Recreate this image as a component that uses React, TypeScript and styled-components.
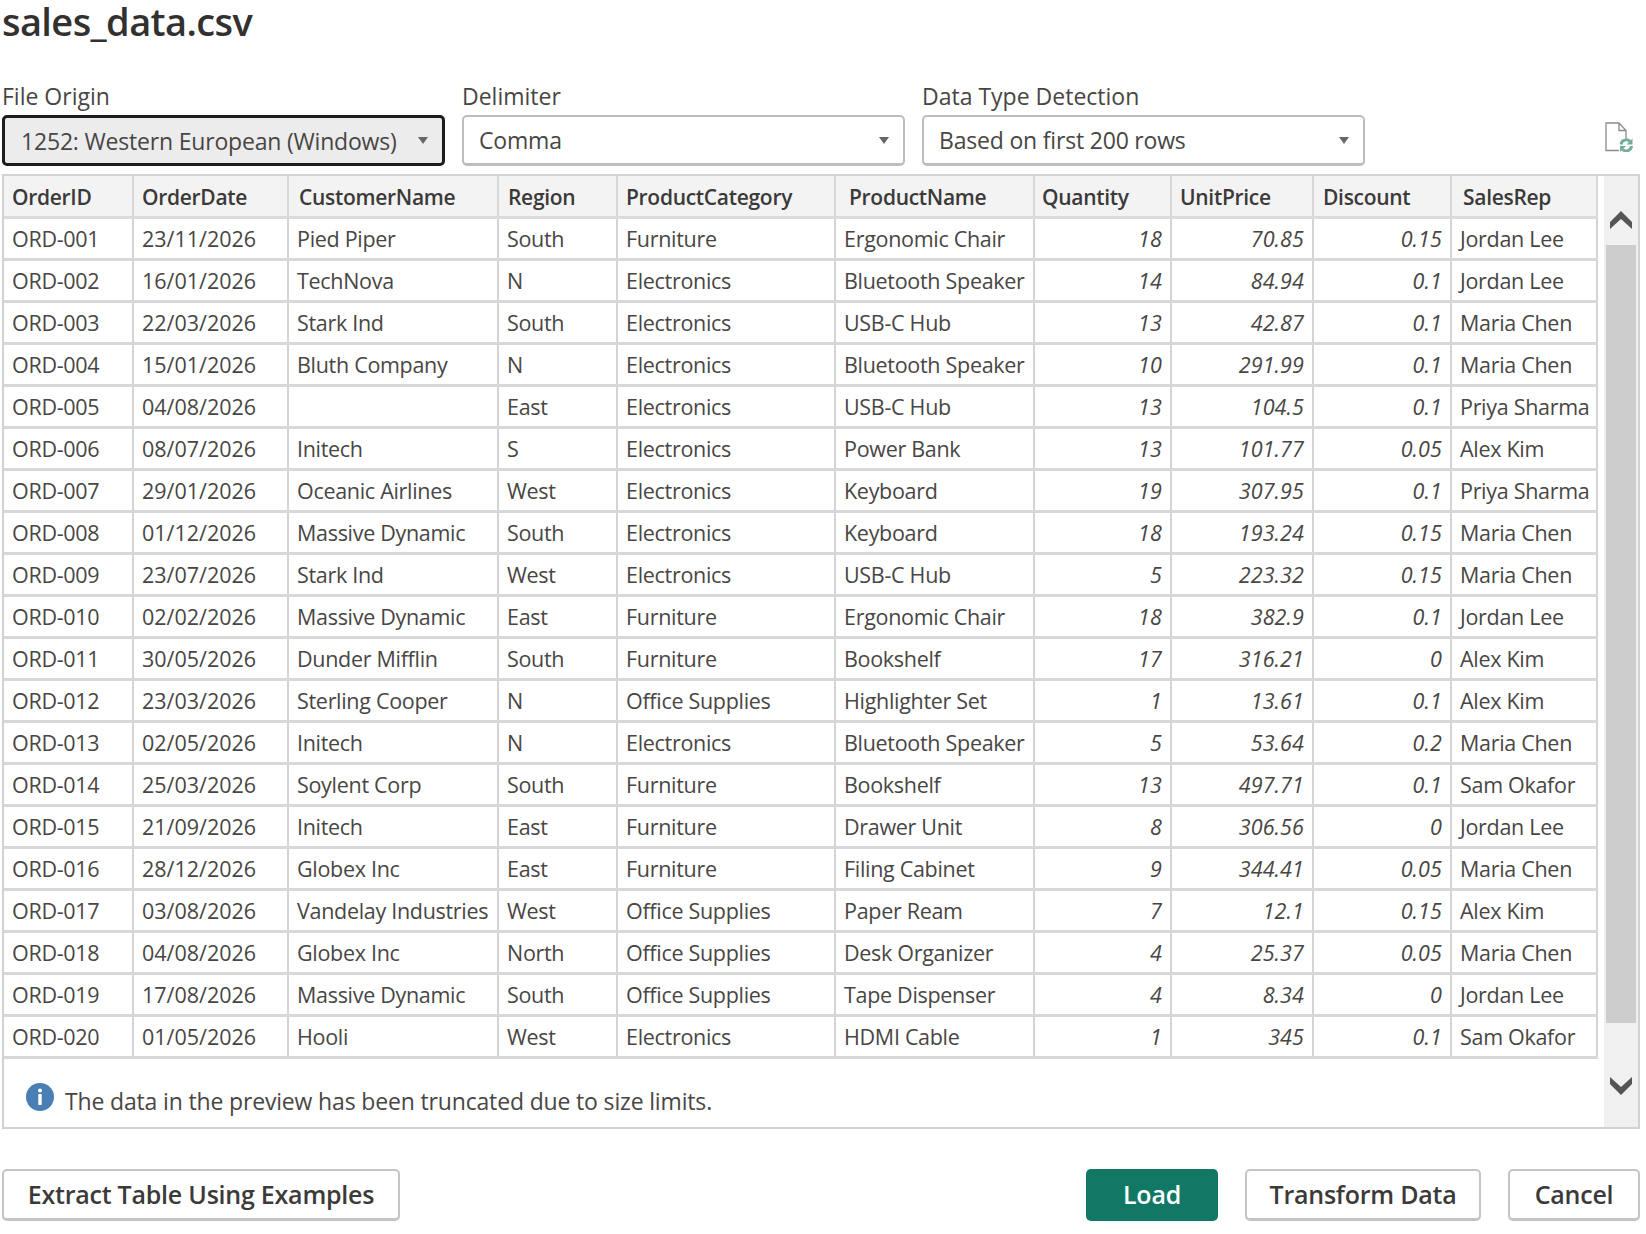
import styled, { createGlobalStyle } from "styled-components"

const GlobalStyle = createGlobalStyle`
    html, body {
        margin: 0;
        padding: 0;
        background: #fff;
    }
    body {
        font-family: "Open Sans", "Noto Sans", sans-serif;
        color: #3b3a39;
    }
`

const Page = styled.div`
    box-sizing: border-box;
    width: 1646px;
    height: 1234px;
    padding: 0 6px 0 2px;
    overflow: hidden;
`

const Title = styled.h1`
    margin: 0;
    height: 75px;
    font-size: 38px;
    line-height: 42px;
    font-weight: 600;
    color: #323130;
    letter-spacing: -0.6px;
`

const Toolbar = styled.div`
    display: flex;
    align-items: flex-end;
    height: 91px;
    gap: 17px;
    margin-bottom: 8px;
`

const Field = styled.div`
    display: flex;
    flex-direction: column;
    width: 443px;
`

const FieldLabel = styled.label`
    font-size: 23px;
    line-height: 30px;
    height: 34px;
    color: #484644;
`

const Select = styled.div<{ $focused?: boolean }>`
    box-sizing: border-box;
    display: flex;
    align-items: center;
    justify-content: space-between;
    height: 51px;
    padding: 0 14px 0 ${(p) => (p.$focused ? "16px" : "15px")};
    font-size: 23px;
    letter-spacing: -0.19px;
    color: #484644;
    border-radius: 5px;
    background: ${(p) => (p.$focused ? "#ececec" : "#fff")};
    border: ${(p) => (p.$focused ? "3px solid #1c1c1c" : "2px solid #bdbdbd")};
    border-bottom-width: 3px;
`

const Caret = styled.span`
    width: 0;
    height: 0;
    border-left: 5.5px solid transparent;
    border-right: 5.5px solid transparent;
    border-top: 7px solid #666;
`

const FileIcon = styled.svg`
    width: 28px;
    height: 30px;
    margin: 0 7px 14px auto;
    flex: none;
`

const Preview = styled.div`
    box-sizing: border-box;
    display: flex;
    height: 955px;
    border: 2px solid #d2d2d2;
`

const TablePane = styled.div`
    flex: 1;
    display: flex;
    flex-direction: column;
    min-width: 0;
`

const DataTable = styled.table`
    border-collapse: collapse;
    table-layout: fixed;
    width: 1593px;
    font-size: 21.5px;
    letter-spacing: -0.3px;
    color: #484644;
`

const HeadCell = styled.th<{ $pad: number }>`
    box-sizing: border-box;
    height: 41px;
    padding: 3px 0 0 ${(p) => p.$pad}px;
    text-align: left;
    font-weight: 600;
    font-size: 21px;
    color: #3b3a39;
    background: #f3f3f3;
    border-right: 2px solid #d8d8d8;
    border-bottom: 3px solid #dcdcdc;
    white-space: nowrap;
    overflow: hidden;
`

const Cell = styled.td<{ $num?: boolean; $date?: boolean; $pad: number }>`
    box-sizing: border-box;
    height: 42px;
    padding: ${(p) => (p.$num ? "0 8px 0 0" : `0 0 0 ${p.$pad}px`)};
    text-align: ${(p) => (p.$num ? "right" : "left")};
    font-style: ${(p) => (p.$num ? "italic" : "normal")};
    letter-spacing: ${(p) => (p.$num ? "0.1px" : p.$date ? "0" : "inherit")};
    border-right: 2px solid #d4d4d4;
    border-bottom: 3px solid #d8d8d8;
    white-space: nowrap;
    overflow: hidden;
`

const Notice = styled.div`
    display: flex;
    align-items: center;
    gap: 11px;
    flex: 1;
    padding: 14px 0 0 22px;
    font-size: 23px;
    letter-spacing: -0.16px;
    color: #484644;
`

const InfoIcon = styled.svg`
    width: 28px;
    height: 28px;
    flex: none;
    margin-top: -5px;
`

const NoticeText = styled.span`
    margin-top: 2px;
`

const ScrollBar = styled.div`
    box-sizing: border-box;
    display: flex;
    flex-direction: column;
    align-items: center;
    width: 34px;
    margin-left: 7px;
    background: #f0f0f0;
`

const ScrollArrow = styled.svg<{ $h: number }>`
    width: 24px;
    height: 18px;
    flex: none;
    margin: ${(p) => p.$h}px 0 0;
`

const ScrollThumb = styled.div`
    width: 30px;
    height: 778px;
    margin: 16px 0 0;
    background: #cdcdcd;
`

const Footer = styled.div`
    display: flex;
    align-items: center;
    gap: 27px;
    margin-top: 40px;
`

const Button = styled.button<{ $primary?: boolean; $w: number }>`
    box-sizing: border-box;
    width: ${(p) => p.$w}px;
    height: 52px;
    font-family: inherit;
    font-size: 25px;
    font-weight: 600;
    letter-spacing: -0.23px;
    color: ${(p) => (p.$primary ? "#fff" : "#3b3a39")};
    background: ${(p) => (p.$primary ? "#117865" : "#fff")};
    border: ${(p) => (p.$primary ? "none" : "2px solid #c4c4c4")};
    border-bottom-width: ${(p) => (p.$primary ? "0" : "3px")};
    border-radius: 5px;
    padding: 0 0 2px;
`

const Spacer = styled.div`
    flex: 1;
`

const columns = [
    { key: "OrderID", width: 129, pad: 8 },
    { key: "OrderDate", width: 155, pad: 8 },
    { key: "CustomerName", width: 210, pad: 10 },
    { key: "Region", width: 119, pad: 9 },
    { key: "ProductCategory", width: 218, pad: 8 },
    { key: "ProductName", width: 199, pad: 13 },
    { key: "Quantity", width: 137, pad: 7 },
    { key: "UnitPrice", width: 142, pad: 8 },
    { key: "Discount", width: 138, pad: 9 },
    { key: "SalesRep", width: 146, pad: 11 },
]

const rows = [
    ["ORD-001", "23/11/2026", "Pied Piper", "South", "Furniture", "Ergonomic Chair", "18", "70.85", "0.15", "Jordan Lee"],
    ["ORD-002", "16/01/2026", "TechNova", "N", "Electronics", "Bluetooth Speaker", "14", "84.94", "0.1", "Jordan Lee"],
    ["ORD-003", "22/03/2026", "Stark Ind", "South", "Electronics", "USB-C Hub", "13", "42.87", "0.1", "Maria Chen"],
    ["ORD-004", "15/01/2026", "Bluth Company", "N", "Electronics", "Bluetooth Speaker", "10", "291.99", "0.1", "Maria Chen"],
    ["ORD-005", "04/08/2026", "", "East", "Electronics", "USB-C Hub", "13", "104.5", "0.1", "Priya Sharma"],
    ["ORD-006", "08/07/2026", "Initech", "S", "Electronics", "Power Bank", "13", "101.77", "0.05", "Alex Kim"],
    ["ORD-007", "29/01/2026", "Oceanic Airlines", "West", "Electronics", "Keyboard", "19", "307.95", "0.1", "Priya Sharma"],
    ["ORD-008", "01/12/2026", "Massive Dynamic", "South", "Electronics", "Keyboard", "18", "193.24", "0.15", "Maria Chen"],
    ["ORD-009", "23/07/2026", "Stark Ind", "West", "Electronics", "USB-C Hub", "5", "223.32", "0.15", "Maria Chen"],
    ["ORD-010", "02/02/2026", "Massive Dynamic", "East", "Furniture", "Ergonomic Chair", "18", "382.9", "0.1", "Jordan Lee"],
    ["ORD-011", "30/05/2026", "Dunder Mifflin", "South", "Furniture", "Bookshelf", "17", "316.21", "0", "Alex Kim"],
    ["ORD-012", "23/03/2026", "Sterling Cooper", "N", "Office Supplies", "Highlighter Set", "1", "13.61", "0.1", "Alex Kim"],
    ["ORD-013", "02/05/2026", "Initech", "N", "Electronics", "Bluetooth Speaker", "5", "53.64", "0.2", "Maria Chen"],
    ["ORD-014", "25/03/2026", "Soylent Corp", "South", "Furniture", "Bookshelf", "13", "497.71", "0.1", "Sam Okafor"],
    ["ORD-015", "21/09/2026", "Initech", "East", "Furniture", "Drawer Unit", "8", "306.56", "0", "Jordan Lee"],
    ["ORD-016", "28/12/2026", "Globex Inc", "East", "Furniture", "Filing Cabinet", "9", "344.41", "0.05", "Maria Chen"],
    ["ORD-017", "03/08/2026", "Vandelay Industries", "West", "Office Supplies", "Paper Ream", "7", "12.1", "0.15", "Alex Kim"],
    ["ORD-018", "04/08/2026", "Globex Inc", "North", "Office Supplies", "Desk Organizer", "4", "25.37", "0.05", "Maria Chen"],
    ["ORD-019", "17/08/2026", "Massive Dynamic", "South", "Office Supplies", "Tape Dispenser", "4", "8.34", "0", "Jordan Lee"],
    ["ORD-020", "01/05/2026", "Hooli", "West", "Electronics", "HDMI Cable", "1", "345", "0.1", "Sam Okafor"],
]

const isNumeric = (index: number) => index >= 6 && index <= 8

export default function App() {
    return (
        <Page>
            <GlobalStyle />
            <Title>sales_data.csv</Title>
            <Toolbar>
                <Field>
                    <FieldLabel>File Origin</FieldLabel>
                    <Select $focused>
                        1252: Western European (Windows)
                        <Caret />
                    </Select>
                </Field>
                <Field>
                    <FieldLabel>Delimiter</FieldLabel>
                    <Select>
                        Comma
                        <Caret />
                    </Select>
                </Field>
                <Field>
                    <FieldLabel>Data Type Detection</FieldLabel>
                    <Select>
                        Based on first 200 rows
                        <Caret />
                    </Select>
                </Field>
                <FileIcon viewBox="0 0 28 30">
                    <path d="M14 28.500H1V1h13l7 7.500v8M14 1v7.500h7" fill="none" stroke="#8c8c8c" strokeWidth="1.300" />
                    <path d="M16 22.500a5.200 5.200 0 0 1 9-3" fill="none" stroke="#72ad9b" strokeWidth="3" />
                    <path d="M26.500 24a5.200 5.200 0 0 1-9 3.200" fill="none" stroke="#72ad9b" strokeWidth="3" />
                    <path d="M27.500 16.500v6h-6zM15 30v-6h6z" fill="#72ad9b" />
                </FileIcon>
            </Toolbar>
            <Preview>
                <TablePane>
                    <DataTable>
                        <colgroup>
                            {columns.map((c) => (
                                <col key={c.key} width={c.width} />
                            ))}
                        </colgroup>
                        <thead>
                            <tr>
                                {columns.map((c) => (
                                    <HeadCell key={c.key} $pad={c.pad}>
                                        {c.key}
                                    </HeadCell>
                                ))}
                            </tr>
                        </thead>
                        <tbody>
                            {rows.map((row) => (
                                <tr key={row[0]}>
                                    {row.map((value, i) => (
                                        <Cell key={i} $num={isNumeric(i)} $date={i === 1} $pad={8}>
                                            {value}
                                        </Cell>
                                    ))}
                                </tr>
                            ))}
                        </tbody>
                    </DataTable>
                    <Notice>
                        <InfoIcon viewBox="0 0 28 28">
                            <circle cx="14" cy="14" r="14" fill="#4a7fb5" />
                            <circle cx="14" cy="7.500" r="2" fill="#fff" />
                            <rect x="12.300" y="11" width="3.400" height="11" fill="#fff" />
                        </InfoIcon>
                        <NoticeText>The data in the preview has been truncated due to size limits.</NoticeText>
                    </Notice>
                </TablePane>
                <ScrollBar>
                    <ScrollArrow $h={35} viewBox="0 0 24 18">
                        <path d="M12 0 23 11v7L12 8 1 18v-7z" fill="#555" />
                    </ScrollArrow>
                    <ScrollThumb />
                    <ScrollArrow $h={54} viewBox="0 0 24 18">
                        <path d="M12 18 1 7V0l11 10L23 0v7z" fill="#555" />
                    </ScrollArrow>
                </ScrollBar>
            </Preview>
            <Footer>
                <Button $w={398}>Extract Table Using Examples</Button>
                <Spacer />
                <Button $primary $w={132}>Load</Button>
                <Button $w={236}>Transform Data</Button>
                <Button $w={132}>Cancel</Button>
            </Footer>
        </Page>
    )
}
